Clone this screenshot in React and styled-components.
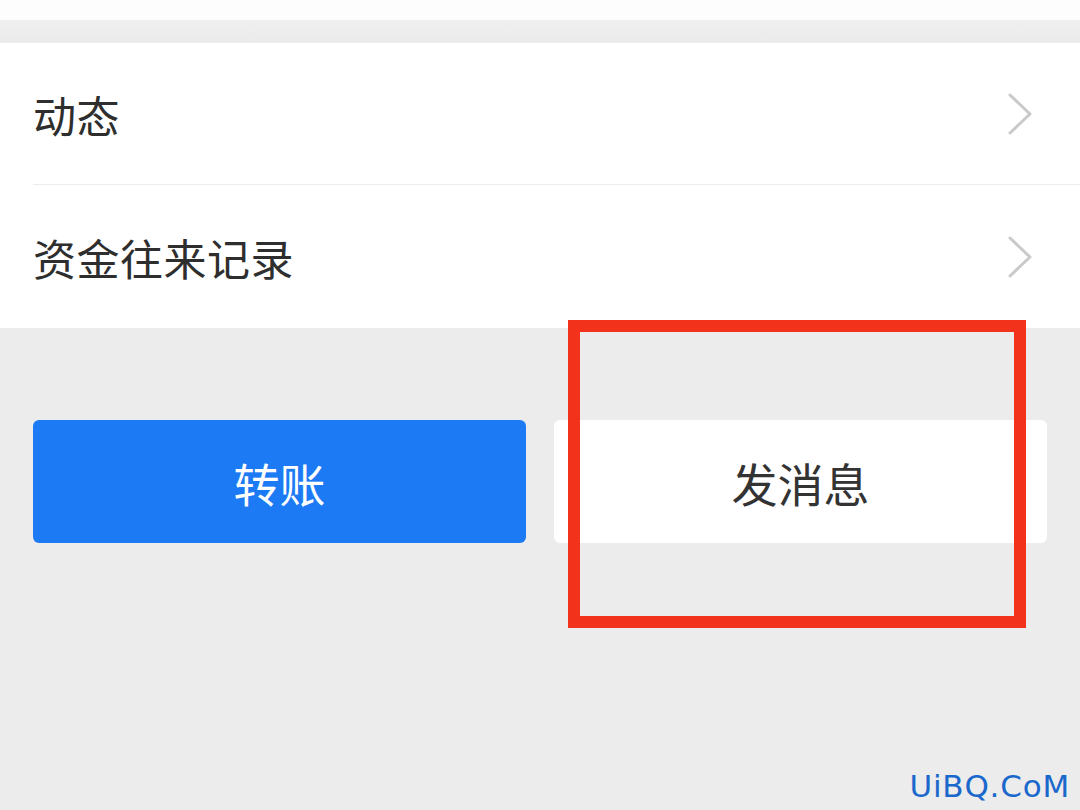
import styled, { createGlobalStyle } from "styled-components";

const GlobalStyle = createGlobalStyle`
  html, body {
    margin: 0;
    padding: 0;
    background: #ececec;
  }
  * {
    box-sizing: border-box;
  }
`;

const Chevron = () => (
  <svg width="30" height="44" viewBox="0 0 30 44" fill="none">
    <path d="M6 3 L26 22 L6 41" stroke="#c9c9c9" strokeWidth="3" strokeLinecap="round" strokeLinejoin="round" />
  </svg>
);

const App = () => {
  return (
    <Page>
      <GlobalStyle />
      <TopStrip />
      <Band />
      <List>
        <Row>
          <Label>动态</Label>
          <Chevron />
        </Row>
        <Row last>
          <Label>资金往来记录</Label>
          <Chevron />
        </Row>
      </List>
      <Actions>
        <Button primary>转账</Button>
        <Button>发消息</Button>
      </Actions>
      <Highlight />
      <Watermark>UiBQ.CoM</Watermark>
    </Page>
  );
};

export default App;

const Page = styled.div`
  position: relative;
  width: 1080px;
  height: 810px;
  overflow: hidden;
  background: #ececec;
  font-family: "Noto Sans CJK SC", "Noto Sans", sans-serif;
`;

const TopStrip = styled.div`
  height: 20px;
  background: #fdfdfd;
`;

const Band = styled.div`
  height: 23px;
  background: linear-gradient(#efefef, #ebebeb);
`;

const List = styled.div`
  background: #ffffff;
  padding-left: 33px;
`;

const Row = styled.div`
  display: flex;
  align-items: center;
  justify-content: space-between;
  height: ${(p) => (p.last ? "143px" : "142px")};
  padding-right: 46px;
  border-bottom: ${(p) => (p.last ? "none" : "1px solid #ececec")};
`;

const Label = styled.span`
  font-size: 43px;
  color: #2e2e2e;
  letter-spacing: 0.5px;
`;

const Actions = styled.div`
  display: flex;
  gap: 28px;
  padding: 92px 33px 0 33px;
`;

const Button = styled.div`
  flex: 1;
  height: 123px;
  border-radius: 6px;
  display: flex;
  align-items: center;
  justify-content: center;
  font-size: 46px;
  background: ${(p) => (p.primary ? "#1c7af5" : "#ffffff")};
  color: ${(p) => (p.primary ? "#ffffff" : "#333333")};
`;

const Highlight = styled.div`
  position: absolute;
  left: 568px;
  top: 320px;
  width: 458px;
  height: 308px;
  border: 12px solid #f2321a;
`;

const Watermark = styled.div`
  position: absolute;
  right: 10px;
  bottom: 6px;
  font-family: "DejaVu Sans", Verdana, sans-serif;
  font-size: 31px;
  color: #1a68cc;
  letter-spacing: 0.8px;
`;
